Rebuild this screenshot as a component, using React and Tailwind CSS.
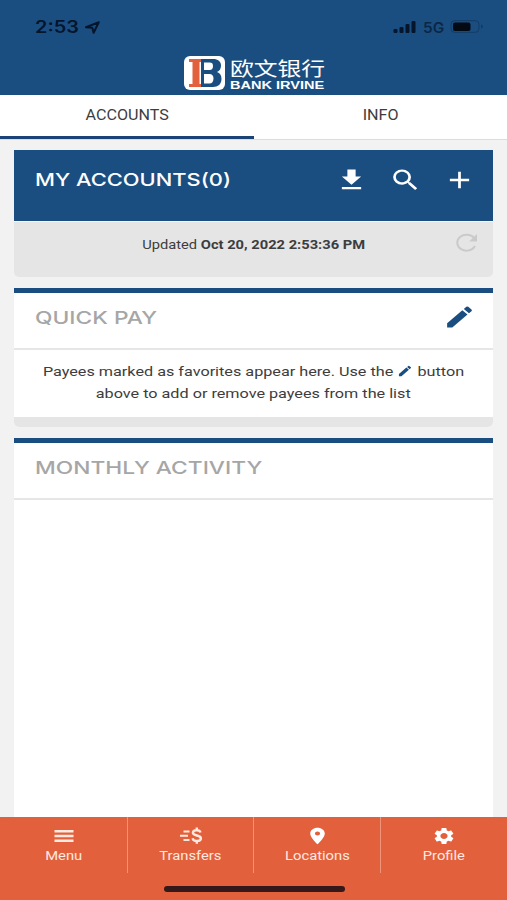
import React from "react";
import { MdDownload, MdSearch, MdAdd, MdEdit, MdLocationOn, MdSettings } from "react-icons/md";


export default function App() {
    return (
        <div className="flex h-[900px] w-[507px] flex-col overflow-hidden bg-[#f2f2f2] font-['Roboto',sans-serif] text-[#3d3d3d]">
            <header className="flex h-[95px] shrink-0 flex-col bg-[#1b4e80]">
                <StatusBar />
                <div className="flex items-start pl-[184px]">
                    <Logo />
                    <div className="ml-[5px] flex flex-col whitespace-nowrap text-white">
                        <span className="origin-left scale-x-[1.22] font-['Noto_Sans_CJK_SC',sans-serif] text-[19.5px] leading-[23px]">欧文银行</span>
                        <span className="origin-left scale-x-[1.32] font-['Liberation_Sans',sans-serif] text-[11px] leading-[12px] font-bold">BANK IRVINE</span>
                    </div>
                </div>
            </header>
            <nav className="flex h-[45px] shrink-0 border-b border-[#dcdcdc] bg-white">
                <Tab label="ACCOUNTS" active />
                <Tab label="INFO" />
            </nav>
            <main className="flex min-h-0 flex-1 flex-col gap-[11px] px-[14px] pt-[10px]">
                <section className="flex h-[127px] shrink-0 flex-col overflow-hidden rounded-b-[5px]">
                    <div className="flex h-[71px] items-start bg-[#1b4e80] pt-[15px] pl-[21px] text-white">
                        <h1 className="w-[300px] whitespace-nowrap font-['Inter',sans-serif] text-[17.5px] leading-[30px] font-medium">
                            <span className="inline-block origin-left scale-x-[1.25]">MY ACCOUNTS(0)</span>
                        </h1>
                        <div className="flex items-center gap-[21px] pt-px">
                            <MdDownload className="h-[28px] w-[33px]" preserveAspectRatio="none" />
                            <MdSearch className="h-[28px] w-[33px]" preserveAspectRatio="none" />
                            <MdAdd className="h-[28px] w-[33px]" preserveAspectRatio="none" />
                        </div>
                    </div>
                    <div className="flex h-[56px] items-start border-t border-[#f5f5f5] bg-[#e6e5e6] pt-[11px]">
                        <p className="ml-[38px] flex-1 whitespace-nowrap text-center text-[13px] leading-[24px]">
                            <span className="inline-block scale-x-[1.13]">Updated <b>Oct 20, 2022 2:53:36 PM</b></span>
                        </p>
                        <RefreshIcon />
                    </div>
                </section>
                <section className="flex h-[139px] shrink-0 flex-col overflow-hidden rounded-b-[5px] border-t-[5px] border-[#1b4e80] bg-white">
                    <div className="flex h-[57px] shrink-0 items-start justify-between border-b-2 border-[#e6e6e6] pt-[10px] pr-[17px] pl-[21px]">
                        <CardTitle>QUICK PAY</CardTitle>
                        <MdEdit className="h-[28px] w-[33px] text-[#1b4e80]" preserveAspectRatio="none" />
                    </div>
                    <div className="flex-1 pt-[10px] text-center text-[13.5px] leading-[22px] whitespace-nowrap">
                        <p>
                            <span className="inline-block scale-x-[1.2]">
                                Payees marked as favorites appear here. Use the <MdEdit className="mb-[3px] inline h-[14px] w-[13.5px] text-[#1b4e80]" preserveAspectRatio="none" /> button
                            </span>
                        </p>
                        <p>
                            <span className="inline-block scale-x-[1.2]">above to add or remove payees from the list</span>
                        </p>
                    </div>
                    <div className="h-[10px] shrink-0 bg-[#e5e5e5]" />
                </section>
                <section className="flex-1 border-t-[5px] border-[#1b4e80] bg-white">
                    <div className="h-[57px] border-b-2 border-[#e6e6e6] pt-[10px] pl-[21px]">
                        <CardTitle>MONTHLY ACTIVITY</CardTitle>
                    </div>
                </section>
            </main>
            <BottomNav />
        </div>
    );
}


function StatusBar() {
    return (
        <div className="flex h-[56px] items-start pt-[17px] pl-[35px] text-[#05152b]">
            <span className="w-[50px] text-[17px] leading-[21px] font-semibold font-['Inter',sans-serif]">
                <span className="inline-block origin-left scale-x-[1.17]">2:53</span>
            </span>
            <svg className="mt-[4px] h-[13px] w-[15px]" viewBox="0 0 15 13" fill="none">
                <path d="M1 6.3 13.8 1.2 8.6 11.8 7.3 6.7Z" stroke="currentColor" strokeWidth="2" strokeLinejoin="round" />
            </svg>
            <svg className="mt-[4px] ml-[293px] h-[13px] w-[23px]" viewBox="0 0 23 13" fill="currentColor">
                <rect x="0.5" y="8" width="4" height="4" rx="1" />
                <rect x="6.5" y="6" width="4" height="6" rx="1" />
                <rect x="12.5" y="3" width="4" height="9" rx="1" />
                <rect x="18.5" y="0" width="4" height="12" rx="1" />
            </svg>
            <span className="ml-[7px] w-[27px] text-[14px] leading-[22px] font-semibold text-[#0b2747] font-['Inter',sans-serif]">
                <span className="inline-block origin-left scale-x-[1.1]">5G</span>
            </span>
            <svg className="mt-[3px] h-[13px] w-[34px]" viewBox="0 0 34 13">
                <rect x="1" y="0.7" width="28" height="11.6" rx="3.5" fill="none" stroke="#123c66" />
                <rect x="3" y="2.5" width="17.5" height="8.5" rx="2" fill="#030a14" />
                <path d="M31 4.5v4q2-.6 2-2t-2-2Z" fill="#123c66" />
            </svg>
        </div>
    );
}


function Logo() {
    return (
        <svg className="h-[34px] w-[41px]" viewBox="0 0 41 34">
            <rect width="41" height="34" rx="6" fill="#fff" />
            <path d="M17 3h12c5 0 8 2.500 8 6.500 0 3.500-1.500 5.500-4 6.500 3 1 4.500 3.500 4.500 7 0 5-3.500 8-8.500 8H17Z" fill="#1b4e80" />
            <path d="M20 6.500h5.500c2.500 0 3.500 1 3.500 3.500s-1 4-3.500 4H20ZM20 18h5.500c2.500 0 4 1.500 4 4.500s-1.500 5-4 5H20Z" fill="#fff" />
            <path d="M5 3h12v3h-1.500v22H17v3H5v-3h3.500V6H5Z" fill="#e2603b" />
        </svg>
    );
}


function Tab({ label, active }) {
    return (
        <div className={`flex h-[44px] justify-center pt-[9px] text-[14px] leading-[22px] ${active ? "w-[254px] border-b-[3.500px] border-[#1b4375]" : "w-[253px]"}`}>
            <span className="scale-x-[1.15]">{label}</span>
        </div>
    );
}


function CardTitle({ children }) {
    return (
        <h2 className="whitespace-nowrap font-['Inter',sans-serif] text-[17.5px] leading-[30px] font-medium text-[#a6a6a6]">
            <span className="inline-block origin-left scale-x-[1.3]">{children}</span>
        </h2>
    );
}


function RefreshIcon() {
    return (
        <svg className="mr-[15px] h-[20px] w-[23px]" viewBox="0 0 23 20" fill="none">
            <path d="M19.500 5.500A9.300 8 0 1 0 20 13" stroke="#cbcacb" strokeWidth="2" />
            <path d="M22 1v7.500h-8Z" fill="#cbcacb" />
        </svg>
    );
}


function BottomNav() {
    return (
        <footer className="flex h-[83px] shrink-0 flex-col items-center bg-[#e2603b] text-[#ffe9e0]">
            <div className="grid h-[56px] w-full grid-cols-[128px_126px_127px_126px]">
                <NavItem label="Menu" divider>
                    <svg className="h-[20px] w-[24px]" viewBox="0 0 24 20" fill="currentColor">
                        <path d="M2.500 4h19v2.500h-19zM2.500 8.800h19v2.500h-19zM2.500 13.600h19v2.500h-19z" />
                    </svg>
                </NavItem>
                <NavItem label="Transfers" divider>
                    <svg className="h-[20px] w-[24px]" viewBox="0 0 24 20" fill="none" stroke="currentColor" strokeWidth="2">
                        <path d="M4.500 5.500h6M1 9.700h8M4.500 14h6" />
                        <path d="M21.500 6.500C21 4.900 19.500 4.200 17.700 4.200c-2.300 0-3.800 1-3.800 2.600 0 3.700 8 1.700 8 5.500 0 1.600-1.500 2.700-4 2.700-2.200 0-3.900-.8-4.300-2.800M17.800 1.500v3M17.800 15v2.700" strokeWidth="2.400" />
                    </svg>
                </NavItem>
                <NavItem label="Locations" divider>
                    <MdLocationOn className="h-[20px] w-[25px] text-white" preserveAspectRatio="none" />
                </NavItem>
                <NavItem label="Profile">
                    <MdSettings className="h-[20px] w-[24px] text-white" preserveAspectRatio="none" />
                </NavItem>
            </div>
            <div className="mt-[13px] ml-[1px] h-[6px] w-[181px] rounded-full bg-[#35191a]" />
        </footer>
    );
}


function NavItem({ label, divider, children }) {
    return (
        <div className={`flex flex-col items-center border-r pt-[9px] ${divider ? "border-[#ee9478]" : "border-transparent"}`}>
            {children}
            <span className="scale-x-[1.18] text-[12.5px] leading-[19px]">{label}</span>
        </div>
    );
}
